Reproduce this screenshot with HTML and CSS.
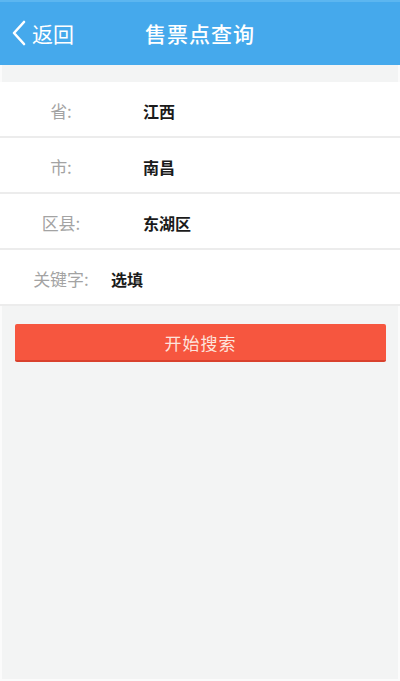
FILE: index.html
```html
<!DOCTYPE html>
<html lang="zh-CN">
<head>
  <meta charset="UTF-8">
  <title>售票点查询</title>
  <link rel="stylesheet" href="styles.css">
</head>
<body>
  <header class="topbar">
    <a class="back" href="#">
      <svg class="back-icon" width="16" height="26" viewBox="0 0 16 26">
        <path d="M13 2 L3 13 L13 24" fill="none" stroke="#fff" stroke-width="2.6" stroke-linecap="round" stroke-linejoin="round"/>
      </svg>
      <span>返回</span>
    </a>
    <h1 class="title">售票点查询</h1>
  </header>

  <section class="form">
    <div class="row">
      <span class="label">省:</span>
      <span class="value">江西</span>
    </div>
    <div class="row">
      <span class="label">市:</span>
      <span class="value">南昌</span>
    </div>
    <div class="row">
      <span class="label">区县:</span>
      <span class="value">东湖区</span>
    </div>
    <div class="row">
      <span class="label">关键字:</span>
      <span class="value value-input">选填</span>
    </div>
  </section>

  <div class="actions">
    <button class="search">开始搜索</button>
  </div>
</body>
</html>
```

FILE: styles.css
```css
html, body {
  margin: 0;
  height: 100%;
}

body {
  background: #f3f4f4;
  font-family: "Noto Sans CJK SC", "Noto Sans", sans-serif;
  box-shadow: inset 0 0 0 2px #fbfbfb;
}

.topbar {
  height: 65px;
  background: #45a9ec;
  border-top: 2px solid #5cb6f0;
  box-sizing: border-box;
  display: flex;
  align-items: center;
  position: relative;
  color: #fff;
}

.back {
  display: flex;
  align-items: center;
  color: #fff;
  text-decoration: none;
  padding-left: 11px;
  font-size: 21px;
  margin-top: -2px;
}

.back-icon {
  margin-right: 5px;
}

.title {
  position: absolute;
  left: 0;
  right: 0;
  margin: -2px 0 0;
  text-align: center;
  font-size: 21px;
  font-weight: 500;
  letter-spacing: 1px;
  pointer-events: none;
}

.form {
  margin-top: 17px;
  background: #fff;
}

.row {
  height: 56px;
  display: flex;
  align-items: center;
  padding-top: 3px;
  border-bottom: 2px solid #ececec;
  box-sizing: border-box;
}

.label {
  width: 122px;
  text-align: center;
  color: #a3a3a3;
  font-size: 17px;
}

.value {
  margin-left: 21px;
  color: #1b1b1b;
  font-size: 16px;
  font-weight: 700;
}

.value-input {
  margin-left: -11px;
}

.actions {
  padding: 18px 14px 0 15px;
}

.search {
  display: block;
  width: 100%;
  height: 38px;
  border: none;
  border-bottom: 2px solid #d9412d;
  border-radius: 2px;
  background: #f6563f;
  color: #fde3dc;
  font-family: inherit;
  font-size: 17px;
  letter-spacing: 1px;
}
```
